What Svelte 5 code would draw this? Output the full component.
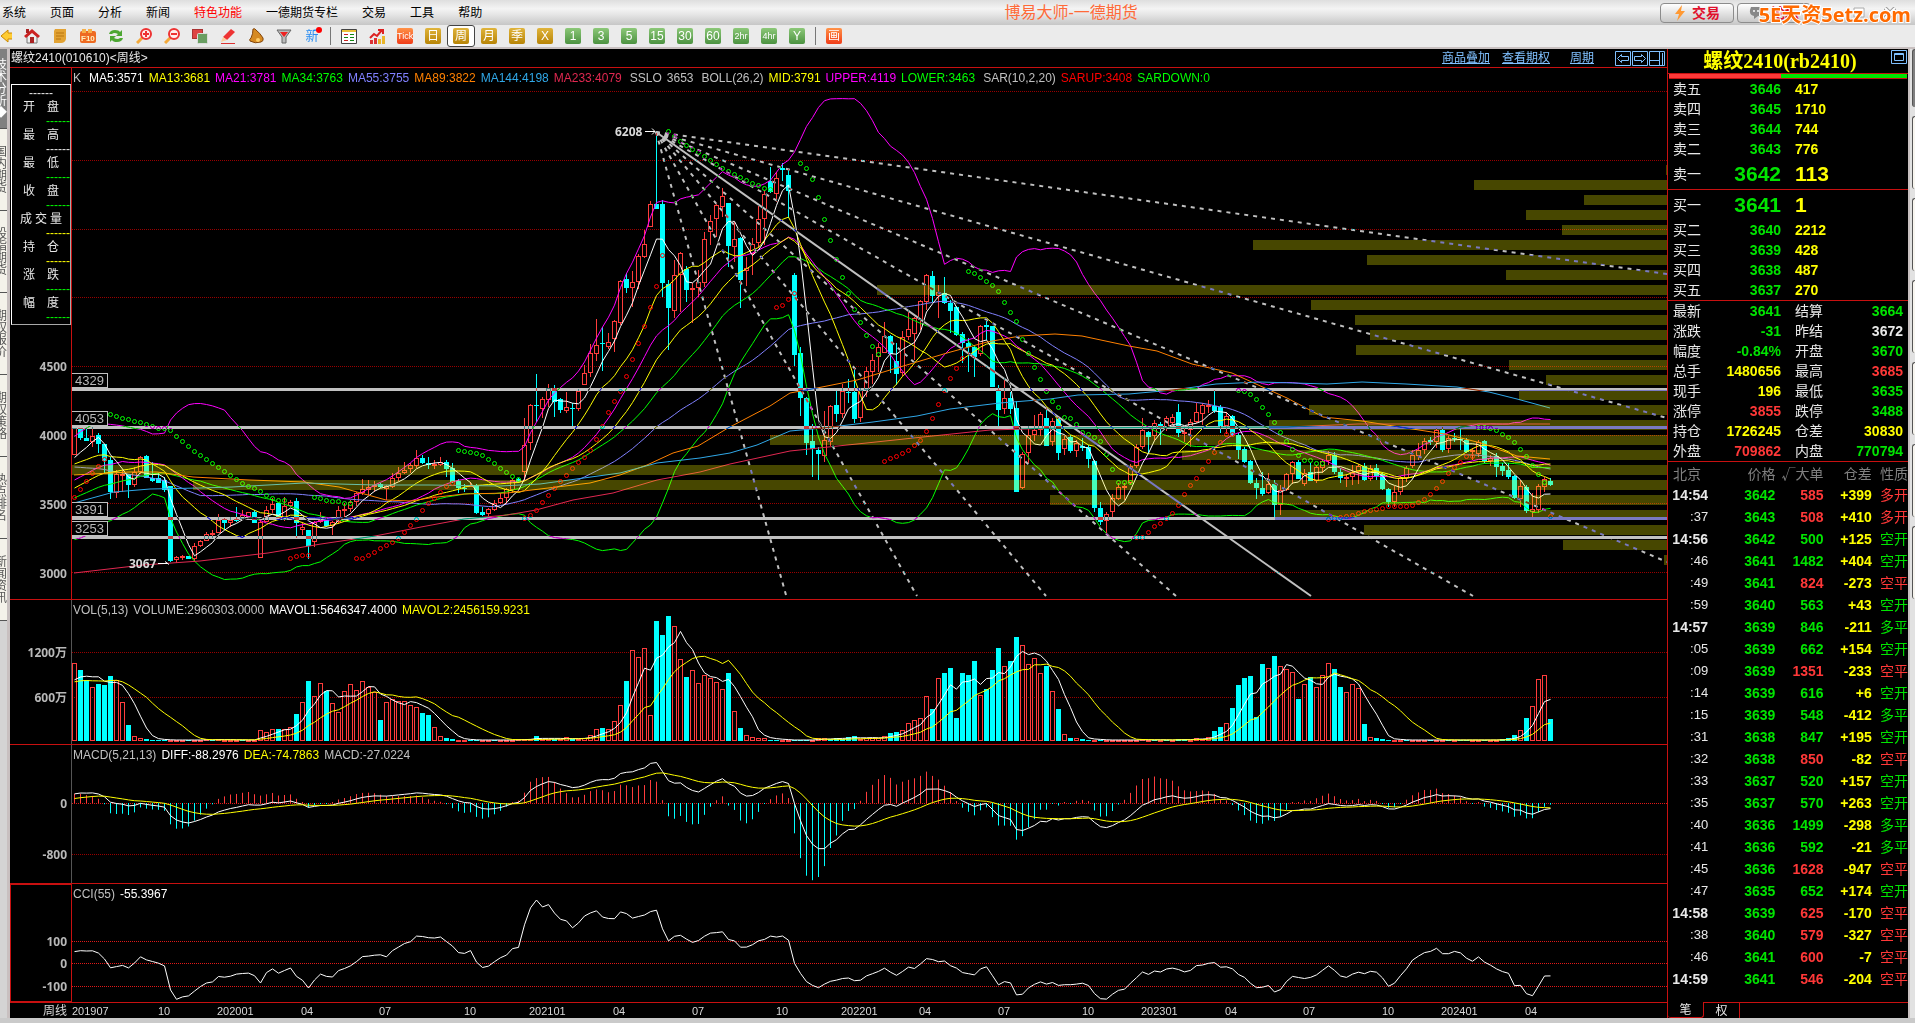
<script>
    const menus = ['系统', '页面', '分析', '新闻', '特色功能', '一德期货专栏', '交易', '工具', '帮助'];
    const periods = ['日', '周', '月', '季', 'X', '1', '3', '5', '15', '30', '60', '2hr', '4hr', 'Y'];
    const leftTabs = ['技术分析', '国内期货', '股指期货', '期权报价', '期权策略', '热点排名', '新闻资讯'];
    const infoRows = [
        ['开盘', 'green'], ['最高', 'white'], ['最低', 'green'], ['收盘', 'green'],
        ['成交量', 'yellow'], ['持仓', 'yellow'], ['涨跌', 'green'], ['幅度', 'green']
    ];
    const asks = [['卖五', 3646, 417], ['卖四', 3645, 1710], ['卖三', 3644, 744], ['卖二', 3643, 776], ['卖一', 3642, 113]];
    const bids = [['买一', 3641, 1], ['买二', 3640, 2212], ['买三', 3639, 428], ['买四', 3638, 487], ['买五', 3637, 270]];
    const stats = [
        ['最新', '3641', 'g', '结算', '3664', 'g'],
        ['涨跌', '-31', 'g', '昨结', '3672', 'w'],
        ['幅度', '-0.84%', 'g', '开盘', '3670', 'g'],
        ['总手', '1480656', 'y', '最高', '3685', 'r'],
        ['现手', '196', 'y', '最低', '3635', 'g'],
        ['涨停', '3855', 'r', '跌停', '3488', 'g'],
        ['持仓', '1726245', 'y', '仓差', '30830', 'y'],
        ['外盘', '709862', 'r', '内盘', '770794', 'g']
    ];
    const ticks = `14:54 3642 585 +399 多开 r
:37 3643 508 +410 多开 r
14:56 3642 500 +125 空开 g
:46 3641 1482 +404 空开 g
:49 3641 824 -273 空平 r
:59 3640 563 +43 空开 g
14:57 3639 846 -211 多平 g
:05 3639 662 +154 空开 g
:09 3639 1351 -233 空平 r
:14 3639 616 +6 空开 g
:15 3639 548 -412 多平 g
:31 3638 847 +195 空开 g
:32 3638 850 -82 空平 r
:33 3637 520 +157 空开 g
:35 3637 570 +263 空开 g
:40 3636 1499 -298 多平 g
:41 3636 592 -21 多平 g
:45 3636 1628 -947 空平 r
:47 3635 652 +174 空开 g
14:58 3639 625 -170 空平 r
:38 3640 579 -327 空平 r
:46 3641 600 -7 空平 r
14:59 3641 546 -204 空平 r`.split('\n').map((l) => l.split(' '));

    const priceLegend = [
        [['K', '#c0c0c0']],
        [['MA5:3571', '#fff'], ['MA13:3681', '#ff0'], ['MA21:3781', '#f0f'], ['MA34:3763', '#0f0'], ['MA55:3755', '#8080ff'],
            ['MA89:3822', '#ff8000'], ['MA144:4198', '#30a8e8'], ['MA233:4079', '#e02850']],
        [['SSLO', '#c0c0c0'], ['3653', '#c0c0c0']],
        [['BOLL(26,2)', '#c0c0c0'], ['MID:3791', '#ff0'], ['UPPER:4119', '#f0f'], ['LOWER:3463', '#0f0']],
        [['SAR(10,2,20)', '#c0c0c0'], ['SARUP:3408', '#f00'], ['SARDOWN:0', '#0f0']]
    ];
    const volLegend = [[['VOL(5,13)', '#c0c0c0'], ['VOLUME:2960303.0000', '#c0c0c0'], ['MAVOL1:5646347.4000', '#fff'], ['MAVOL2:2456159.9231', '#ff0']]];
    const macdLegend = [[['MACD(5,21,13)', '#c0c0c0'], ['DIFF:-88.2976', '#fff'], ['DEA:-74.7863', '#ff0'], ['MACD:-27.0224', '#c0c0c0']]];
    const cciLegend = [[['CCI(55)', '#c0c0c0'], ['-55.3967', '#fff']]];

    // weekly bars: direction, body top-bottom, optional high and low, all on the plot scale
    const candles = `u428-455 d428-438,428,440 d438-441,428,441 u436-442,427,447 d435-444,433,453 d444-461,444,473 d460-492,457,499 u474-493,470,498 u474-475,470,492 d474-485,474,498
u472-485,467,487 u457-472,456,474 d456-478,455,478 d478-481,462,482 d478-483,473,483 d480-490,477,492 d486-561,486,562 u557-560,556,563 u556-557,555,560 d556-559
u546-559,543,562 u541-546,540,547 u534-541,532,541 u533-534,530,538 u520-533,514,533 d519-523,518,530 u520-523,517,527 d519-521,507,522 u515-519,510,520 u512-517
d512-523,510,523 u522-558,520,558 u510-522,506,522 u504-510,498,513 d503-518 u506-520,497,521 u502-506,500,507 d501-523,498,538 u527-530,522,535 d530-546,530,559
u522-542,521,547 u520-522,512,523 d520-526,518,527 u522-526,521,535 u510-522,506,524 u509-510,503,517 u502-509,500,512 u493-502,492,506 u489-493,479,495 u487-490,480,495
u485-487,481,492 d484-487,483,488 u486-489,485,500 u478-487,473,488 u473-478,467,481 u470-473,462,474 u465-469,463,473 u458-466,450,468 d458-463,455,464 d463-465,457,469
u464-466,460,469 u462-465,457,466 d462-469,460,477 d468-482,463,483 d481-488,479,493 d488-489,484,492 u485-486,482,487 d485-513,484,514 d512-515,507,516 u509-514,508,516
u503-510,500,511 u498-503,493,504 u489-498,488,504 u480-490,478,493 d479-482,478,483 u445-472,418,481 u405-443,404,450 d405-406,374,422 u399-409,397,418 u388-400,384,407
d388-402,385,417 d399-410,398,413 u407-411,392,413 d408-409,403,426 u391-409,389,411 u373-385,365,385 u353-373,344,377 u345-354,319,361 d343-344,327,371 u342-347,333,349
u321-339,320,352 u281-323,280,325 d279-288,273,293 u282-288,271,307 u256-282,254,289 u244-257,230,258 u204-227,201,227 d204-209,133,209 d204-283,200,297 d284-308,280,350
u275-311,260,318 u253-275,252,312 d269-290,266,302 u288-289,283,323 u282-288,270,297 u239-283,232,287 u221-232,215,245 u205-219,202,237 u196-207,188,217 d203-246,203,267
u239-247,222,262 d238-280,237,308 u268-271,257,286 u244-254,238,275 u219-243,205,248 u194-219,190,245 d181-192,167,193 u178-194,172,202 d168-170,163,181 d175-191,168,218
d275-355,273,366 d353-398,347,416 d398-443,397,455 d441-449,424,477 d450-454,447,480 u440-456,411,462 u406-442,405,446 d405-414,391,422 u391-414,384,418 d392-393,379,403
d392-419,368,423 u390-418,388,422 u371-390,367,397 u360-372,354,384 u347-357,343,372 u336-353,322,353 d336-354,335,373 d361-374,343,385 u337-373,331,376 u329-337,310,340
u318-334,317,360 u301-320,300,330 u275-302,274,310 d276-296,271,302 u292-296,285,318 d293-303,277,304 d303-311,300,333 d307-335,306,336 d334-343,332,363 d343-347,338,372
d347-357,345,377 u326-354,325,356 d325-327,320,340 d326-387 d390-410,385,426 u398-409,378,414 d398-409,392,414 d408-492,401,492 u454-488,452,489 u435-453,426,463
u430-435,415,441 u414-430,412,436 d418-446,407,446 u421-442,418,446 d419-453,417,460 u439-449,436,455 d437-451,435,453 u443-451,440,457 d446-448,438,451 d447-459,445,468
d461-508,460,512 d508-522,502,525 u514-521,512,534 u498-512,494,517 u487-499,483,500 u486-487,483,500 u466-483,464,485 u447-466,444,468 u430-447,418,449 d432-437,431,453
u423-436,420,441 d424-428,422,445 u418-428,416,431 u417-423,414,426 d412-433,404,437 u432-434,428,442 u422-430,419,447 u412-422,403,423 u405-414,403,425 u405-407,400,413
d406-411,390,413 d407-426,405,433 u416-426,412,434 d416-435,415,436 d435-450,433,459 d449-462,447,463 d461-483,460,484 d483-488,478,499 d488-494,472,496 u484-493,473,494
d484-505,480,517 u490-505,485,515 u474-490,473,491 u462-474,461,484 d462-479,460,479 u473-484,469,486 d472-481,463,481 u467-481,465,483 u461-468,459,473 u455-461,451,465
d455-472,452,474 d472-478,468,483 u477-478,474,487 u472-477,465,485 u466-472,464,484 d466-480,463,481 u468-479,465,481 d468-476,464,480 d474-489,472,490 d489-502,488,507
u492-502,486,507 u478-492,476,495 u468-478,466,482 u455-466,450,468 u450-456,443,460 u441-450,438,454 d440-442,437,445 u430-442,428,448 d430-450,427,452 u438-449,436,453
d438-439,433,442 d439-440,429,450 d440-452,438,453 u450-452,448,460 u442-454,440,457 d441-461,440,463 u458-461,455,466 d456-467,453,477 d466-471,463,476 d470-477,463,479
d476-498,475,499 u486-499,480,507 d487-511,485,513 u509-512,493,517 u486-510,484,513 u479-487,477,492 d481-485,478,486`
        .split(/\s+/)
        .map((s, i) => {
            const [body, high, low] = s.slice(1).split(',');
            const [top, bottom] = body.split('-').map(Number);
            return { x: 74 + 6 * i, up: s[0] === 'u', top, bottom, high: +(high ?? top), low: +(low ?? bottom) };
        });

    // a minus sign marks a falling week
    const volumes = `78 -71 -61 54 -57 -56 -65 61 39 -16 5 3 -2 -1 -1 -1 1 1 1 -1 1 1 2 -1 2 1 1 1 -1 1 1 11 9 12 -12 12 14 -27 39 -60
45 58 -50 38 29 50 57 51 60 54 49 -21 39 42 40 40 36 34 -28 -26 14 5 -3 -2 1 1 -1 -1 1 1 -1 1 1 1 2 2 2 -5 2 2
-2 2 4 -2 2 3 6 12 -13 12 20 36 -60 91 84 93 26 -120 -106 -125 115 82 -64 71 58 66 63 59 52 -68 30 -13 6 4 3 3 -1 -1 1 1
-1 -1 -1 1 3 3 -2 -3 -2 -4 -5 2 3 3 3 5 -8 -9 11 18 21 23 45 -32 63 -68 -73 -23 -68 -66 -80 46 -52 -71 -93 75 -80 -104 96 77
83 68 -75 50 -32 7 -3 3 -2 -1 1 -1 1 1 1 1 1 1 2 1 -1 1 -1 1 -2 -2 1 3 2 4 -10 -14 18 -33 -56 -63 -65 -24 -77 73
-85 75 72 69 -42 57 -64 54 66 78 -72 -54 49 57 53 -17 4 -3 -2 -1 1 1 -1 1 1 1 -1 1 1 -1 1 -1 -1 1 1 -1 1 1 -2 -3
-6 11 -23 35 62 66 -22`.split(/\s+/).map(Number);

    const sar = [
        [0, 'r', '497 489 481 473 466 459'],
        [6, 'g', '414 416 418 419 421 422 424 426 428 428 430 436 441 446 451 455 459 463 467 471 475 479 483 486 488 491 495 498 500 500'],
        [36, 'r', '558 556 555 555'],
        [40, 'g', '497 498 500 501 501 503 503'],
        [47, 'r', '558 558 555 552 548 545 542 538 532 525 519 510 503 498 492 486 483'],
        [64, 'g', '450 451 452 453 455 459 463 468 472 476 479'],
        [75, 'r', '518 515 510 502 495 488 481 475 468 462 457 450 439 426 412 401 391 376 359 343 326 307 286 255'],
        [99, 'g', '131 136 141 145 149 152 156 160 164 168 171 174 177 180 183 185 188 189'],
        [117, 'r', '307 305 299 293'],
        [121, 'g', '163 168 179 197 219 240 259 277 293 309 322 335 346 354'],
        [135, 'r', '461 458 456 453 450 445 440 431 418 404 390 378 368 358'],
        [149, 'g', '271 273 277 281 285 291 302 312 321 339 353 367 379 391 401 407 417 418 424 432 434 437 441 454 469 482 482 482'],
        [177, 'r', '537 537 532 526 523 518 513 505 494 485 478 469 461 452 442 434 434'],
        [194, 'g', '390 391 394 399 407 414 422 432 441 449 455 460 460 463 463'],
        [209, 'r', '519 518 517 516 515 513 511 510 509 508 506 506 506 506 505 502 499 494 488 481 473 467 462 456 456'],
        [234, 'g', '427 427 428 430 434 437 442 449 456 465 474 482'],
        [246, 'r', '516']
    ].flatMap(([start, side, ys]) => ys.split(' ').map((y, k) => ({ x: 74 + 6 * (start + k), y: +y, side })));

    // price distribution, one bar every 15px from y=165
    const profile = [1666, 1474, 1584, 1526, 1562, 1253, 1367, 1506, 877, 1311, 1355, 1370, 1356, 1509, 1546, 1519, 1309, 1269, 770, 1182, 72, 193, 1050, 1275, 1364, 1563, 1664];
    const levels = [[4329, 389], [4053, 427], [3391, 518], [3253, 537]];
    const fan = [[1667, 274], [1667, 418], [1667, 562], [1473, 596], [1176, 596], [1046, 596], [917, 596], [786, 595]];
    const dates = [['201907', 72], ['10', 158], ['202001', 217], ['04', 301], ['07', 379], ['10', 464], ['202101', 529], ['04', 613], ['07', 692], ['10', 776],
        ['202201', 841], ['04', 919], ['07', 998], ['10', 1082], ['202301', 1141], ['04', 1225], ['07', 1303], ['10', 1382], ['202401', 1441], ['04', 1525]];

    // weeks before the first visible bar, needed by the averages
    const past = [[21, 417], [8, 530], [5, 522], [8, 506], [8, 468], [4, 465]].flatMap(([n, v]) => Array(n).fill(v));
    const closes = [...past, ...candles.map((c) => (c.up ? c.top : c.bottom))];
    const typical = [...past, ...candles.map((c) => ((c.up ? c.top : c.bottom) + c.high + c.low) / 3)];
    const mean = (a) => a.reduce((s, v) => s + v, 0) / a.length;
    const windows = (src, n) => candles.map((c, i) => src.slice(i + past.length - n + 1, i + past.length + 1));
    const line = (ys) => ys.map((y, i) => `${74.5 + 6 * i},${y.toFixed(1)}`).join(' ');

    function ema(src, n) {
        let v = src[0];
        return src.map((s) => (v += (2 / (n + 1)) * (s - v)));
    }

    const boll = windows(closes, 26).map((w) => {
        const m = mean(w);
        return [m, 2 * Math.sqrt(mean(w.map((v) => (v - m) ** 2)))];
    });
    const curves = [
        [line(windows(closes, 55).map(mean)), '#8080ff'],
        [line(windows(closes, 34).map(mean)), '#0f0'],
        [line(windows(closes, 21).map(mean)), '#f0f'],
        [line(windows(closes, 13).map(mean)), '#ff0'],
        [line(boll.map(([m]) => m)), '#ff0'],
        [line(boll.map(([m, d]) => m - d)), '#f0f'],
        [line(boll.map(([m, d]) => m + d)), '#0f0'],
        [line(windows(closes, 5).map(mean)), '#fff'],
        ['74,475 129,472 157,472 193,477 250,480 304,482 339,487 386,500 411,501 429,498 464,494 507,493 540,489 590,483 620,475 647,465 673,453 698,446 728,428 770,406 790,393 817,388 857,380 900,367 947,353 987,342 1020,336 1055,334 1082,336 1129,346 1157,351 1192,364 1232,373 1256,384 1287,398 1323,417 1362,421 1406,428 1445,434 1481,443 1517,456 1550,459', '#ff8000'],
        ['74,503 114,492 150,489 200,488 232,487 304,483 339,484 375,485 429,485 500,486 540,484 620,473 657,463 700,458 730,453 757,445 790,431 823,428 873,422 917,416 950,409 1000,403 1050,399 1078,395 1129,394 1173,390 1216,384 1260,382 1327,384 1362,382 1406,384 1457,387 1489,392 1517,399 1550,408', '#30a8e8'],
        ['74,573 143,565 200,561 268,553 321,544 375,536 421,527 464,519 507,515 536,510 573,500 613,493 657,480 700,472 730,464 790,451 857,444 923,437 990,430 1060,428 1287,427 1358,424 1550,424', '#e02850']
    ];

    const heights = [...Array(past.length - 4).fill(58), 57, 57, 57, 57, ...volumes.map(Math.abs)];
    const volCurves = [
        [line(windows(heights, 5).map((w) => 741 - mean(w))), '#fff'],
        [line(windows(heights, 13).map((w) => 741 - mean(w))), '#ff0']
    ];

    const fast = ema(closes, 5);
    const slow = ema(closes, 21);
    const allDiff = fast.map((v, i) => (v - slow[i]) * 0.463);
    const allDea = ema(allDiff, 13);
    const diff = allDiff.slice(past.length);
    const dea = allDea.slice(past.length);
    const macd = diff.map((v, i) => 2 * (v - dea[i]));

    const cci = windows(typical, 55).map((w) => {
        const m = mean(w);
        return 963 + ((w[54] - m) / (0.015 * mean(w.map((v) => Math.abs(v - m))))) * 0.225;
    });
</script>

{#snippet legend(groups)}
    <div class="legend">
        {#each groups as group}
            <div>
                {#each group as [text, color]}<span style="color: {color}">{text}</span>{/each}
            </div>
        {/each}
    </div>
{/snippet}

{#snippet grid(ys, bright)}
    {#each ys as y}
        <line class="dots" class:bright x1="72" x2="2800" y1={y + 0.5} y2={y + 0.5} />
    {/each}
{/snippet}

<div class="app">
    <header class="menubar">
        <nav>
            {#each menus as m}
                <button class:hot={m === '特色功能'}>{m}</button>
            {/each}
        </nav>
        <h1>博易大师-一德期货</h1>
        <div class="winbar">
            <button class="pill">
                <svg width="12" height="16" viewBox="0 0 12 16"><path d="M8 0L1 9h4l-2 7 8-10H7z" fill="#f93" /></svg>交易
            </button>
            <button class="pill">
                <svg width="16" height="14" viewBox="0 0 16 14"><path d="M2 1h11q3 1 2 5-1 4-6 4l-4 3V10Q0 9 1 4z" fill="#888" /><path d="M4 5h2M8 5h2M12 5h1" stroke="#ddd" stroke-width="2" /></svg>论坛
            </button>
            <button class="win" aria-label="min"><svg width="12" height="12"><path d="M1 8h10v3H1z" fill="#fff" stroke="#aaa" /></svg></button>
            <button class="win" aria-label="max"><svg width="12" height="12"><path d="M1 1h10v9H1zM4 4h4v3H4z" fill="#fff" stroke="#aaa" /></svg></button>
            <button class="win" aria-label="close"><svg width="12" height="12"><path d="M1 1l10 10M11 1L1 11" stroke="#999" stroke-width="4" /><path d="M1 1l10 10M11 1L1 11" stroke="#fff" stroke-width="2" /></svg></button>
        </div>
        <div class="mark">5E天资5etz.com</div>
    </header>

    <div class="toolbar">
        <button class="first" aria-label="back"><svg width="16" height="16"><path d="M1 8l7-6v3h7v6H8v3z" fill="#fc3" stroke="#c80" /></svg></button>
        <button aria-label="home"><svg width="16" height="16"><path d="M3 8v7h10V8L8 4z" fill="#eee" stroke="#777" /><path d="M0 8l8-7 8 7-2 2-6-5-6 5z" fill="#c22" /><path d="M2 1h3v4H2zM6 9h4v6H6z" fill="#a22" /></svg></button>
        <button aria-label="notes"><svg width="16" height="16"><path d="M3 1h11v10q-1 4-5 4H2V3z" fill="#e2a233" /><path d="M4 5h8M4 8h8M4 11h5" stroke="#b87410" /></svg></button>
        <button aria-label="F10"><svg width="16" height="16"><rect y="3" width="16" height="12" rx="2" fill="#ee6a22" /><path d="M2 1h4v4H2zM8 1h4v4H8z" fill="#f6b04a" /><text x="1" y="13">F10</text></svg></button>
        <button aria-label="refresh"><svg width="16" height="16"><path d="M1 6q1-4 6-4 4 0 5 2l2-2v6H8l2-2q-4-2-6 0zM15 10q-1 4-6 4-4 0-5-2l-2 2V8h6l-2 2q4 2 6 0z" fill="#4da632" /></svg></button>
        {#each ['+', '-'] as sign}
            <button aria-label="zoom {sign}"><svg width="16" height="16"><path d="M1 15l6-6" stroke="#f4a93a" stroke-width="3" /><circle cx="10" cy="6" r="5" fill="#fee" stroke="#e33" stroke-width="2" /><path d={sign === '+' ? 'M7 6h6M10 3v6' : 'M7 6h6'} stroke="#e33" stroke-width="2" /></svg></button>
        {/each}
        <button aria-label="overlay"><svg width="16" height="16"><rect x="0.5" y="1.5" width="10" height="9" fill="#d44" stroke="#a33" /><rect x="5.5" y="5.5" width="10" height="10" rx="1" fill="#6a9e62" stroke="#ddd" /></svg></button>
        <button aria-label="draw"><svg width="16" height="16"><path d="M3 9l8-8 4 3-8 8z" fill="#e33" /><path d="M3 9l4 3-6 2z" fill="#fc9" /><path d="M1 15.500h14" stroke="#d33" /></svg></button>
        <button aria-label="alert"><svg width="16" height="16"><path d="M5 1q2-1 3 1 4 3 7 8 1 3-2 4-6 2-11-1-1-2 1-3 2-4 2-9z" fill="#d68a22" stroke="#84460c" /><ellipse cx="8" cy="12" rx="5" ry="2" fill="#5a2a08" /><circle cx="10" cy="12" r="2" fill="#fc6" /></svg></button>
        <button aria-label="filter"><svg width="16" height="16"><path d="M1 2h14l-5 7v6H6V9z" fill="#bbb" stroke="#666" /><path d="M4 4h8l-4 5z" fill="#e22" /></svg></button>
        <button class="fresh">新<i></i></button>
        <hr />
        <button aria-label="table"><svg width="16" height="16"><path d="M.5 1.500h15v14H.5z" fill="#fff" stroke="#444" /><path d="M1 3h14" stroke="#eac23a" stroke-width="2" /><path d="M3 6.500h4M3 12.500h4" stroke="#c22" /><path d="M9 6.500h4M3 9.500h4M9 9.500h4M9 12.500h4" stroke="#181" /></svg></button>
        <button aria-label="chart"><svg width="16" height="16"><path d="M1 12h3v4H1zM5 10h3v6H5z" fill="#d33" /><path d="M9 11h3v5H9zM13 8h3v8h-3z" fill="#eab52a" /><path d="M1 10l4-4 3 2 5-6M9 2h5v4" fill="none" stroke="#d22" stroke-width="2" /></svg></button>
        <button><b class="red tick">Tick</b></button>
        {#each periods as p, i}
            <button class:active={p === '周'}><b class={i < 5 ? 'gold' : 'leaf'} class:tick={p.length > 2}>{p}</b></button>
        {/each}
        <hr />
        <button><b class="red">画</b></button>
    </div>

    <main>
        <aside class="left">
            {#each leftTabs as t, i}
                <div class:on={i === 0}><span>{#each t as ch}{ch}<br />{/each}{i === 0 ? '◆' : ''}</span></div>
            {/each}
        </aside>

        <section class="chart">
            <div class="head">
                <h2>螺纹2410(010610)&lt;周线&gt;</h2>
                <a href="#overlay">商品叠加</a>
                <a href="#option">查看期权</a>
                <a href="#period" class="period">周期</a>
                <svg width="51" height="15" fill="none" stroke="#80c0ff">
                    <path d="M.5.5h15v14H.5zM17.500.5h15v14h-15zM34.500.5h15v14h-15z" />
                    <path d="M2.500 7.500l4-4v2h7v4h-7v2zM30.500 7.500l-4-4v2h-7v4h7v2zM34.500 9.500h10M44.500.5v14M47.500 2v12" />
                </svg>
            </div>

            <div class="panel price">
                <div class="axis">
                    <svg width="61" height="531">
                        {#each [4500, 4000, 3500, 3000] as p, i}
                            <text x="57" y={303 + 69 * i} text-anchor="end">{p}</text>
                        {/each}
                    </svg>
                    <div class="info">
                        <i class="center">------</i>
                        {#each infoRows as [label, color]}
                            <span class:wide={label.length > 2}>{#each label as ch}<em>{ch}</em>{/each}</span>
                            <i class={color}>------</i>
                        {/each}
                    </div>
                </div>
                <div class="plot">
                    <svg width="100%" height="531">
                        <g transform="translate(-72 -68)">
                            {@render grid([91, 160, 229, 297, 366, 435, 503, 572], false)}
                            <g shape-rendering="crispEdges">
                                {#each candles as c}
                                    <path class={c.up ? 'up' : 'down'} d="M{c.x + 0.5} {c.high}V{c.top}M{c.x + 0.5} {c.bottom}V{c.low}" />
                                    {#if c.up}
                                        <rect class="up" x={c.x - 1.5} y={c.top + 0.5} width="4" height={Math.max(c.bottom - c.top - 1, 0.5)} />
                                    {:else}
                                        <rect x={c.x - 2} y={c.top} width="5" height={Math.max(c.bottom - c.top, 1)} fill="#0ff" />
                                    {/if}
                                {/each}
                            </g>
                            {#each curves as [points, color]}
                                <polyline {points} stroke={color} />
                            {/each}
                            {#each sar as s}
                                <ellipse cx={s.x + 0.5} cy={s.y + 0.5} rx="2" ry="2" stroke={s.side === 'r' ? '#f00' : '#0f0'} />
                            {/each}
                            {#each profile as x, i}
                                <rect {x} y={165 + 15 * i} width={1667 - x} height="10" fill="#ff0" fill-opacity="0.28" />
                            {/each}
                            <g class="drawn">
                                {#each levels as [, y]}
                                    <path d="M71 {y + 0.5}H1667" stroke-width="3" shape-rendering="crispEdges" />
                                {/each}
                                <path d="M656 132L1311 596" stroke-width="2" />
                                {#each fan as [x, y]}
                                    <path d="M656 132L{x} {y}" stroke-width="2" stroke-dasharray="4 5" />
                                {/each}
                            </g>
                            {#each levels as [value, y]}
                                <rect x="71.500" y={y - 15.5} width="36" height="14" fill="#000" stroke="#c0c0c0" />
                                <text class="level" x="75" y={y - 4}>{value}</text>
                            {/each}
                            <text x="615" y="136">6208</text>
                            <text x="129" y="568">3067</text>
                            <path d="M645 131.500h10m-3-3l3 3-3 3M158 563.500h10m-3-2l4 3" stroke="#fff" fill="none" />
                        </g>
                    </svg>
                    {@render legend(priceLegend)}
                </div>
            </div>

            <div class="panel">
                <div class="axis">
                    <svg width="61" height="144"><text x="57" y="57" text-anchor="end">1200万</text><text x="57" y="102" text-anchor="end">600万</text></svg>
                </div>
                <div class="plot">
                    <svg width="100%" height="144">
                        <g transform="translate(-72 -600)">
                            {@render grid([652, 697], false)}
                            <g shape-rendering="crispEdges">
                                {#each volumes as v, i}
                                    {#if v > 0}
                                        <rect class="up" x={72.5 + 6 * i} y={741.5 - v} width="4" height={Math.max(v - 1, 0.5)} />
                                    {:else}
                                        <rect x={72 + 6 * i} y={741 + v} width="5" height={-v} fill="#0ff" />
                                    {/if}
                                {/each}
                            </g>
                            {#each volCurves as [points, color]}
                                <polyline {points} stroke={color} />
                            {/each}
                        </g>
                    </svg>
                    {@render legend(volLegend)}
                </div>
            </div>

            <div class="panel">
                <div class="axis">
                    <svg width="61" height="138"><text x="57" y="63" text-anchor="end">0</text><text x="57" y="114" text-anchor="end">-800</text></svg>
                </div>
                <div class="plot">
                    <svg width="100%" height="138">
                        <g transform="translate(-72 -745)">
                            {@render grid([803], true)}
                            {@render grid([854], false)}
                            {#each macd as v, i}
                                <path class={v < 0 ? 'up' : 'down'} d="M{74.5 + 6 * i} 803v{v < 0 ? Math.min(v, -1) : Math.max(v, 1)}" />
                            {/each}
                            <polyline points={line(diff.map((v) => 803 + v))} stroke="#fff" />
                            <polyline points={line(dea.map((v) => 803 + v))} stroke="#ff0" />
                        </g>
                    </svg>
                    {@render legend(macdLegend)}
                </div>
            </div>

            <div class="panel">
                <div class="axis boxed">
                    <svg width="61" height="118"><text x="57" y="62" text-anchor="end">100</text><text x="57" y="84" text-anchor="end">0</text><text x="57" y="107" text-anchor="end">-100</text></svg>
                </div>
                <div class="plot">
                    <svg width="100%" height="118">
                        <g transform="translate(-72 -884)">
                            {@render grid([941, 963, 986], true)}
                            <polyline points={line(cci)} stroke="#fff" />
                        </g>
                    </svg>
                    {@render legend(cciLegend)}
                </div>
            </div>

            <svg class="dates" width="100%" height="15">
                <text x="57" y="12" text-anchor="end" class="zh">周线</text>
                {#each dates as [d, x]}
                    <text x={x - 10} y="12">{d}</text>
                {/each}
            </svg>
        </section>

        <section class="quote">
            <div class="name">
                <h2>螺纹2410(rb2410)</h2>
                <svg width="16" height="14" fill="none" stroke="#80c0ff"><path d="M.5.5h15v13H.5zM3.500 3.500h9v7h-9zM3.500 4.500h9" /></svg>
            </div>
            <div class="ratio"><i></i></div>
            <table class="depth">
                <tbody>
                    {#each asks as [label, price, qty], i}
                        <tr class:big={i === 4}><td>{label}</td><td class="g">{price}</td><td class="y">{qty}</td></tr>
                    {/each}
                </tbody>
                <tbody>
                    {#each bids as [label, price, qty], i}
                        <tr class:big={i === 0}><td>{label}</td><td class="g">{price}</td><td class="y">{qty}</td></tr>
                    {/each}
                </tbody>
            </table>
            <table class="stats">
                <tbody>
                    {#each stats as [a, va, ca, b, vb, cb]}
                        <tr><th>{a}</th><td class={ca}>{va}</td><th>{b}</th><td class={cb}>{vb}</td></tr>
                    {/each}
                </tbody>
            </table>
            <table class="ticks">
                <thead>
                    <tr><th>北京</th><th>价格</th><th>√大单</th><th>仓差</th><th>性质</th></tr>
                </thead>
                <tbody>
                    {#each ticks as [time, price, qty, delta, kind, color]}
                        <tr>
                            <td class:sub={time[0] === ':'}>{time}</td><td class="g">{price}</td><td class={color}>{qty}</td><td class="y">{delta}</td><td class={color}>{kind}</td>
                        </tr>
                    {/each}
                </tbody>
            </table>
            <div class="tabs"><button class="cur">笔</button><button>权</button><span></span></div>
        </section>

        <aside class="right">
            {#each Array(7) as _, i}
                <div class:on={i === 0}></div>
            {/each}
        </aside>
    </main>
</div>

<style>
    :global(body) {
        margin: 0;
        background: #cacaca;
    }

    .app {
        font: 12px/14px 'Liberation Sans', 'Noto Sans CJK SC', sans-serif;
        color: #e8e8e8;
        padding-bottom: 5px;
        overflow: hidden;
    }

    button {
        font: inherit;
        color: inherit;
        background: none;
        border: none;
        padding: 0;
    }

    h1, h2 {
        margin: 0;
        font-weight: normal;
    }

    i, em {
        font-style: normal;
    }

    svg {
        display: block;
    }

    .menubar {
        position: relative;
        display: flex;
        justify-content: space-between;
        align-items: center;
        height: 25px;
        background: linear-gradient(#dedede, #f4f4f4 35%, #e4e4e4 60%, #c6c6c6);
    }

    nav {
        display: flex;
        gap: 24px;
        padding-left: 2px;
        color: #000;
    }

    .hot {
        color: #f00;
    }

    h1 {
        font-size: 16px;
        line-height: 24px;
        color: #ff6a38;
    }

    .winbar {
        display: flex;
        align-items: center;
        gap: 3px;
        width: 255px;
    }

    .pill {
        display: flex;
        align-items: center;
        justify-content: center;
        gap: 6px;
        width: 74px;
        height: 20px;
        box-sizing: border-box;
        border: 1px solid #8c8c8c;
        border-radius: 4px;
        background: linear-gradient(#fff, #c8c8c8);
        color: #e0102c;
        font-size: 14px;
        font-weight: bold;
    }

    .win {
        padding: 0 8px;
    }

    .mark {
        position: absolute;
        right: 4px;
        top: 2px;
        font: bold 20px/26px 'Open Sans', 'Noto Sans CJK SC', sans-serif;
        color: #ff6a00;
        -webkit-text-stroke: 2px #fff;
        paint-order: stroke fill;
    }

    .toolbar {
        display: flex;
        height: 22px;
        background: #ebebeb;
        border-bottom: 2px solid #c8c0c0;
    }

    .toolbar button {
        display: flex;
        align-items: center;
        justify-content: center;
        width: 28px;
        height: 22px;
        box-sizing: border-box;
    }

    .toolbar .first {
        width: 18px;
        justify-content: flex-end;
        padding-right: 6px;
    }

    .toolbar hr {
        width: 1px;
        height: 18px;
        margin: 2px 4px;
        border: none;
        background: #777;
    }

    .toolbar .active {
        background: #fff;
        border: 1px solid #444;
        border-radius: 3px;
    }

    .toolbar b {
        width: 16px;
        height: 16px;
        border-radius: 2px;
        color: #fff;
        font-weight: normal;
        line-height: 16px;
        text-align: center;
        white-space: nowrap;
    }

    .gold {
        background: linear-gradient(#e0b43c, #b88406);
    }

    .leaf {
        background: linear-gradient(#8cc878, #4c9240);
    }

    .red {
        background: linear-gradient(#ff9248, #f03c18);
    }

    .toolbar .tick {
        font-size: 9px;
    }

    .toolbar .fresh {
        position: relative;
        color: #2a8cf0;
        font-size: 13px;
    }

    .fresh i {
        position: absolute;
        right: 4px;
        top: 2px;
        width: 6px;
        height: 6px;
        border-radius: 50%;
        background: #f00;
    }

    main {
        display: flex;
        background: #000;
    }

    .left {
        width: 7px;
        border-right: 3px solid #c8c0c0;
        background: #d4d4d4;
        color: #555;
    }

    .left div {
        display: flex;
        justify-content: flex-end;
        align-items: center;
        height: 81px;
        border-bottom: 1px solid #555;
        background: #f4f2ea;
        overflow: hidden;
        line-height: 12px;
    }

    .left .on {
        height: 79px;
        background: #808080;
        color: #fff;
    }

    .chart {
        flex: 1;
        min-width: 0;
    }

    .head {
        display: flex;
        align-items: center;
        gap: 12px;
        height: 18px;
        padding: 0 1px;
        border-bottom: 1px solid #c81010;
    }

    h2 {
        flex: 1;
        font-size: 12px;
    }

    .head a {
        color: #80c0ff;
    }

    .head .period {
        margin: 0 9px 0 8px;
    }

    .panel {
        display: grid;
        grid-template-columns: 62px 1fr;
        border-bottom: 1px solid #c81010;
    }

    .axis, .plot {
        display: grid;
        align-items: start;
        min-width: 0;
        overflow: hidden;
    }

    .axis {
        border-right: 1px solid #555;
    }

    .price .axis {
        border-color: #c81010;
    }

    .boxed {
        outline: 1px solid #c81010;
        outline-offset: -1px;
    }

    .axis > *, .plot > * {
        grid-area: 1 / 1;
    }

    text {
        fill: #d8d8d8;
        font: bold 12px 'Noto Sans', 'Noto Sans CJK SC', sans-serif;
    }

    .axis text {
        fill: #b8b8b8;
    }

    text.level {
        font: 13px 'Liberation Sans', sans-serif;
        fill: #b8b8b8;
    }

    .dates text {
        font: 11px 'Liberation Sans', sans-serif;
    }

    .dates .zh {
        font: 12px 'Noto Sans CJK SC', sans-serif;
    }

    .toolbar text {
        font: bold 8px 'Liberation Sans', sans-serif;
        fill: #fff0c0;
    }

    .info {
        display: flex;
        flex-direction: column;
        margin: 16px 0 0 1px;
        padding-top: 1px;
        width: 58px;
        border: 1px solid #a8a8a8;
        border-top-color: #fff;
        border-left-color: #fff;
    }

    .info span {
        display: flex;
        justify-content: center;
        gap: 12px;
    }

    .info .wide {
        gap: 3px;
    }

    .info i {
        text-align: right;
    }

    .info .center {
        text-align: center;
    }

    .info .green {
        color: #0f0;
    }

    .info .yellow {
        color: #ff0;
    }

    .legend {
        display: flex;
        gap: 8px;
        padding: 3px 1px;
        white-space: nowrap;
    }

    .legend div {
        display: flex;
        gap: 5px;
    }

    .dots {
        stroke: #900;
        stroke-dasharray: 1 1;
        shape-rendering: crispEdges;
    }

    .dots.bright {
        stroke: #e01818;
    }

    polyline, ellipse, path.up, path.down, rect.up {
        fill: none;
    }

    .up {
        stroke: #ff3c3c;
    }

    .down {
        stroke: #0ff;
    }

    .drawn {
        fill: none;
        stroke: #c0c0c0;
        mix-blend-mode: difference;
    }

    .quote {
        display: flex;
        flex-direction: column;
        width: 240px;
        border-left: 1px solid #c81010;
        font-size: 14px;
    }

    .name {
        display: flex;
        height: 24px;
        padding: 0 1px;
        border-bottom: 1px solid #c81010;
    }

    .name h2 {
        font: bold 20px/24px 'Liberation Serif', 'Noto Sans CJK SC', serif;
        color: #ff0;
        text-align: center;
    }

    .name svg {
        margin-top: 1px;
    }

    .ratio {
        height: 4px;
        background: #00e400;
        border-bottom: 1px solid #c81010;
        margin: 0 1px;
    }

    .ratio i {
        display: block;
        width: 47%;
        height: 4px;
        background: #ff3838;
    }

    table {
        width: 100%;
        table-layout: fixed;
        border-spacing: 0;
    }

    td, th {
        height: 20px;
        padding: 0;
        font-weight: normal;
        text-align: right;
        line-height: 20px;
        white-space: nowrap;
    }

    td {
        font-weight: bold;
    }

    .depth tbody, .stats {
        border-bottom: 1px solid #c81010;
    }

    .depth {
        border-collapse: collapse;
    }

    .depth td:first-child, .stats th:first-child {
        width: 33px;
        padding-left: 5px;
        text-align: left;
        font-weight: normal;
    }

    .depth td:nth-child(2) {
        width: 75px;
    }

    .depth td:nth-child(3) {
        padding-left: 14px;
        text-align: left;
    }

    .big td {
        height: 30px;
    }

    .big .g, .big .y {
        font-size: 21px;
    }

    .stats td:nth-child(2) {
        width: 75px;
    }

    .stats th:nth-child(3) {
        width: 42px;
    }

    .stats td:nth-child(4) {
        padding-right: 5px;
    }

    .ticks td, .ticks th {
        height: 22px;
        line-height: 22px;
    }

    .ticks th {
        width: 48px;
        color: #808080;
        font-family: 'Noto Sans CJK SC', sans-serif;
    }

    .ticks th:first-child {
        width: 35px;
        padding-left: 5px;
        text-align: left;
    }

    .ticks th:nth-child(2) {
        width: 67px;
    }

    .ticks th:last-child {
        width: 36px;
    }

    .ticks td:last-child {
        font-weight: normal;
    }

    .ticks .sub {
        font-size: 13px;
        font-weight: normal;
    }

    .g {
        color: #00e400;
    }

    .r {
        color: #ff3838;
    }

    .y {
        color: #ff0;
    }

    .tabs {
        display: flex;
        margin-top: auto;
    }

    .tabs button {
        width: 36px;
        height: 16px;
        box-sizing: border-box;
        border-top: 1px solid #c81010;
        border-right: 1px solid #c81010;
        font-size: 12px;
        line-height: 14px;
    }

    .tabs .cur {
        border-top: none;
        border-bottom: 1px solid #c81010;
        border-radius: 0 0 3px 3px;
    }

    .tabs span {
        flex: 1;
        border-top: 1px solid #c81010;
    }

    .right {
        width: 4px;
        padding-left: 1px;
        border-left: 2px solid #c8c0c0;
        background: #e2e2e2;
    }

    .right div {
        height: 72px;
        margin: 0 0 9px 1px;
        border: solid #555;
        border-width: 1px 0 0 1px;
        border-radius: 4px 0 0 4px;
        background: #f8f6f0;
    }

    .right .on {
        height: 57px;
        background: #808080;
    }
</style>
